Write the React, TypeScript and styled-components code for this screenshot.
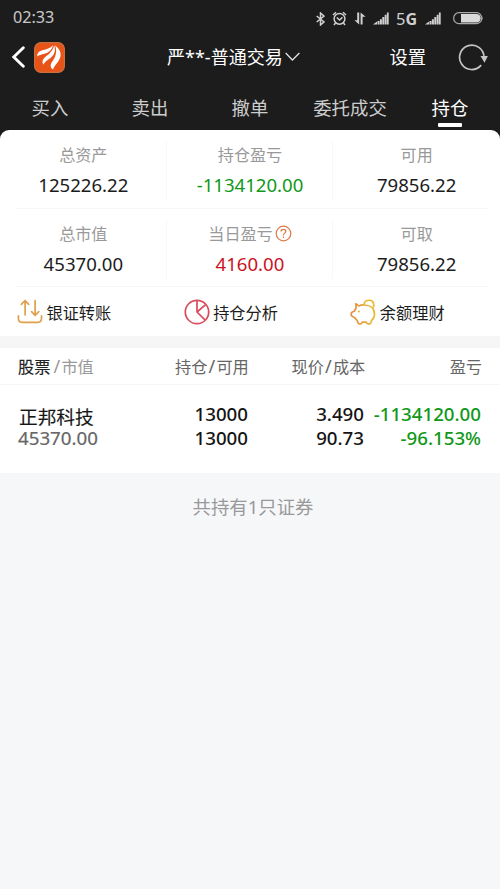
import React from "react";
import styled, { createGlobalStyle } from "styled-components";

const GlobalStyle = createGlobalStyle`
  * { box-sizing: border-box; }
  body {
    margin: 0;
    background: #f6f7f9;
    font-family: "Noto Sans", "Noto Sans CJK SC", sans-serif;
    color: #1c1c1c;
  }
  svg { display: block; flex: none; }
`;

const Screen = styled.div`
  width: 500px;
  height: 889px;
  overflow: hidden;
  background: #f6f7f9;
  white-space: nowrap;
`;

const Header = styled.header`
  height: 130px;
  background: #1c1c1c;
  color: #fff;
`;

const StatusBar = styled.div`
  display: flex;
  align-items: center;
  justify-content: space-between;
  height: 34px;
  padding: 0 16px 0 13px;
`;

const Clock = styled.span`
  font-size: 16.2px;
  line-height: 20px;
  color: #c9c9c9;
`;

const StatusIcons = styled.div`
  display: flex;
  align-items: center;
  padding-top: 3px;
  color: #cfcfcf;
`;

const Network = styled.span`
  display: flex;
  align-items: baseline;
  width: 22px;
  margin: 1px 7px 0 7px;
  font-size: 16.5px;
  line-height: 16px;
  b { font-weight: 700; font-size: 16px; }
`;

const NavBar = styled.div`
  display: grid;
  grid-template-columns: 167px 1fr 200px;
  align-items: center;
  height: 46px;
`;

const NavLeft = styled.div`
  display: flex;
  align-items: center;
  gap: 8px;
  padding-left: 11px;
`;

const AccountTitle = styled.div`
  display: flex;
  align-items: center;
  gap: 2px;
  font-size: 18px;
  line-height: 26px;
`;

const NavRight = styled.div`
  display: flex;
  align-items: center;
  justify-content: flex-end;
  gap: 32px;
  padding-right: 12px;
  font-size: 18.3px;
  line-height: 26px;
`;

const Tabs = styled.nav`
  display: grid;
  grid-template-columns: repeat(5, 1fr);
  height: 50px;
  padding-top: 15px;
`;

const Tab = styled.div<{ $active?: boolean }>`
  display: flex;
  flex-direction: column;
  align-items: center;
  font-size: 18.4px;
  line-height: 26px;
  color: ${(p) => (p.$active ? "#fff" : "#cdcdcd")};
`;

const TabMark = styled.span`
  width: 24px;
  height: 4px;
  margin-top: 2px;
  border-radius: 1px;
  background: #fff;
`;

const CardBackdrop = styled.div`
  background: #1c1c1c;
`;

const Card = styled.section`
  height: 206px;
  background: #fff;
  border-radius: 9px 9px 0 0;
`;

const StatRow = styled.div`
  display: grid;
  grid-template-columns: repeat(3, 1fr);
  height: 78.5px;
  padding-top: 10px;
  background: linear-gradient(#f7f7f7, #f7f7f7) 16px 100% / 472px 1px no-repeat;
`;

const Stat = styled.div`
  display: flex;
  flex-direction: column;
  align-items: center;
  height: 60px;
  padding: 4px 0 0 1px;
  border-right: 1px solid #f8f8f8;
  &:last-child { border-right-color: transparent; }
`;

const StatLabel = styled.div`
  display: flex;
  align-items: center;
  font-size: 16.1px;
  line-height: 22px;
  color: #999;
`;

const StatValue = styled.div<{ $color?: string }>`
  margin-top: 6px;
  font-size: 18.6px;
  line-height: 26px;
  color: ${(p) => p.$color ?? "#1c1c1c"};
`;

const Actions = styled.div`
  display: grid;
  grid-template-columns: repeat(3, 1fr);
  height: 49px;
  padding-left: 17px;
  margin-right: -17px;
`;

const Action = styled.div`
  display: flex;
  align-items: center;
  gap: 3.5px;
  font-size: 16.2px;
`;

const Gap = styled.div`
  height: 12px;
  background: #f6f6f7;
`;

const TableHead = styled.div`
  display: grid;
  grid-template-columns: 157px 116.5px 1fr auto;
  align-items: center;
  height: 37px;
  padding: 2px 18px 0;
  background: #fff;
  border-bottom: 1px solid #f5f5f5;
  font-size: 16.2px;
  color: #666;
`;

const HeadCell = styled.div`
  line-height: 24px;
`;

const HeadMain = styled.span`
  color: #222;
  -webkit-text-stroke: 0.15px #222;
`;

const HeadMuted = styled.span`
  color: #999;
`;

const Slash = styled.span<{ $gap?: number }>`
  margin-left: ${(p) => p.$gap ?? 1}px;
  margin-right: 1.3px;
  font-size: 18px;
  line-height: 20px;
`;

const Holding = styled.div`
  display: grid;
  grid-template-columns: 1fr 116px 117px;
  height: 88px;
  padding: 17px 19px 0 18px;
  background: #fff;
  font-size: 18.7px;
  line-height: 24px;
`;

const HoldingLeft = styled.div`
  display: flex;
  justify-content: space-between;
`;

const Cell = styled.div<{ $color?: string }>`
  font-weight: 500;
  text-align: right;
  color: ${(p) => p.$color ?? "#141414"};
`;

const StockName = styled.div`
  padding: 3px 0 0 1px;
  line-height: 23px;
  color: #161616;
  -webkit-text-stroke: 0.15px #161616;
`;

const StockValue = styled.div`
  line-height: 20px;
  color: #666;
  -webkit-text-stroke: 0.2px #666;
`;

const Summary = styled.div`
  padding: 21px 0 0 6px;
  text-align: center;
  font-size: 18.4px;
  line-height: 26px;
  color: #999;
`;

const Spacer = styled.span<{ $w: number }>`
  width: ${(p) => p.$w}px;
  flex: none;
`;

const Signal = () => (
  <svg width="16" height="13" viewBox="0 0 16 13" fill="currentColor">
    <path d="M0 12.5 4 9.5v3zM4.5 9h2v3.5h-2zM6.9 7.2h2v5.3h-2zM9.3 5h2v7.5h-2zM11.7 2.8h1.9v9.7h-1.9zM13.9 .5h1.8v12h-1.8z" />
  </svg>
);

const Bluetooth = () => (
  <svg width="9" height="14" viewBox="0 0 9 14" fill="none" stroke="currentColor" strokeWidth="1.5">
    <path d="M.7 4 8 9.8 4.5 13V1L8 4.2.7 10" />
  </svg>
);

const Alarm = () => (
  <svg width="15" height="15" viewBox="0 0 15 15" fill="none" stroke="currentColor" strokeWidth="1.5">
    <circle cx="7.5" cy="7.8" r="5.4" />
    <path d="M4.8 6.5 7.5 9l3-2.6M1 4 4 1.2M14 4l-3-2.8M3.5 12 2 14M11.5 12l1.5 2" />
  </svg>
);

const DataArrows = () => (
  <svg width="12" height="13" viewBox="0 0 12 13" fill="currentColor">
    <path d="M3.2.5h2V12.5L.4 8.2H3.2zM6.6 12.5h2V4.8h3L6.6.5z" />
  </svg>
);

const Battery = () => (
  <svg width="31" height="13" viewBox="0 0 31 13">
    <rect x=".7" y=".7" width="28" height="11" rx="5.3" fill="none" stroke="#a9a9a9" strokeWidth="1.2" />
    <path d="M8 2h15.5a4.2 4.2 0 0 1 0 8.4H8z" fill="#d9d9d9" />
    <path d="M29.2 4v4.6q1.5-2.3 0-4.6" fill="#a9a9a9" />
  </svg>
);

const BackArrow = () => (
  <svg width="15" height="22" viewBox="0 0 15 22" fill="none" stroke="#fff" strokeWidth="2.9" strokeLinecap="round">
    <path d="M12.3 1.8 2.8 11l9.5 9.2" />
  </svg>
);

const Logo = () => (
  <svg width="31" height="31" viewBox="0 0 31 31">
    <rect x=".6" y=".6" width="29.8" height="29.8" rx="6.5" fill="#e85318" stroke="#c9713f" strokeWidth="1.2" />
    <g fill="#fff">
      <path d="M3 14.5 C3 11 5 9.1 9 8 C12.5 7.2 16 6.5 19 3.2 C17.8 8 14.8 10.6 10.5 11.8 C7.5 12.6 5 13.2 3 14.5Z" />
      <path d="M9.4 22.7 C7.7 19.8 8.3 17.4 11.5 14.7 C15.5 11.6 19 8.5 20.1 3.2 C22.5 9.8 19.5 14 15 17.1 C12 19.2 10.3 20.7 9.4 22.7Z" />
      <path d="M19.1 27.5 C16 25.5 15.9 22.8 18.5 19.2 C21.4 15.2 23.5 10.3 21.1 3.3 C27.2 8.3 28.3 13.8 24.2 19.5 C21.4 23.3 19.6 25.1 19.1 27.5Z" />
    </g>
  </svg>
);

const ChevronDown = () => (
  <svg width="15" height="10" viewBox="0 0 15 10" fill="none" stroke="#e2e2e2" strokeWidth="1.3">
    <path d="M.7 1 7.4 8 14.4 1" />
  </svg>
);

const Refresh = () => (
  <svg width="30" height="28" viewBox="0 0 30 28">
    <path d="M23.2 22.1A12.2 12.2 0 1 1 26 14.5" fill="none" stroke="#c4c4c4" strokeWidth="1.7" />
    <path d="M22.5 13h7.4l-3.4 6.8z" fill="#c4c4c4" />
  </svg>
);

const Help = () => (
  <svg width="17" height="17" viewBox="0 0 17 17" fill="none" stroke="#dd7a48" strokeWidth="1.2">
    <circle cx="8.5" cy="8.5" r="7.3" />
    <path d="M6 6.5c0-3 4.8-2.9 4.8-.1 0 1.7-2.3 1.8-2.3 3.6v.5M8.5 11.6v1.5" />
  </svg>
);

const Transfer = () => (
  <svg width="26" height="25" viewBox="0 0 26 25" fill="none" stroke="#dfa14c" strokeWidth="1.7" strokeLinecap="round" strokeLinejoin="round">
    <path d="M8.1 16V1.6M4.3 5.4l3.8-3.9 3.6 3.9M18.1 1.6v14.8M14.6 12.7l3.5 3.8 3.7-3.8M1.4 16.8v2.8q0 3.7 3.7 3.7h15.7q3.7 0 3.7-3.7v-2.8" />
  </svg>
);

const Pie = () => (
  <svg width="26" height="26" viewBox="0 0 26 26" fill="none" stroke="#d94c5b" strokeWidth="1.7">
    <circle cx="13" cy="13" r="11.7" />
    <path d="M13 1.3V13l8.2 8.2M13 13l8.6-7.4" />
  </svg>
);

const PiggyBank = () => (
  <svg width="26" height="26" viewBox="0 0 26 26" fill="none" strokeWidth="1.7" strokeLinejoin="round">
    <defs>
      <linearGradient id="pig" x1="0" x2="1">
        <stop offset="0" stopColor="#e58a43" />
        <stop offset="1" stopColor="#e8bb35" />
      </linearGradient>
    </defs>
    <path stroke="url(#pig)" d="M5.8 4.8 8.9 6.9Q11 5.8 14 6c6.5.1 10.5 3.4 10.5 9 0 3-1.2 5.2-3 6.5l-.5 2q-.4 1.4-1.6 1.4h-1.5q-1.1 0-1.5-1.8h-4.1q-.4 1.8-1.5 1.8H9.3q-1.1 0-1.4-1.4l-.7-2-2.4-2.6L2 17.1q-.8-.4-.8-1.9t.8-2l2.5-1.2 1.6-3z" />
    <path stroke="#e8bb35" d="M14 5.7c.6-5.8 9.3-6.1 9.8.2q0 1.5-.8 2.7" />
    <circle cx="8.8" cy="12.6" r="1" fill="#e8a63c" />
  </svg>
);

const GREEN = "#109818";
const RED = "#cb1222";

export default function App() {
  return (
    <Screen>
      <GlobalStyle />
      <Header>
        <StatusBar>
          <Clock>02:33</Clock>
          <StatusIcons>
            <Bluetooth />
            <Spacer $w={7} />
            <Alarm />
            <Spacer $w={7} />
            <DataArrows />
            <Spacer $w={7} />
            <Signal />
            <Network>5<b>G</b></Network>
            <Signal />
            <Spacer $w={12} />
            <Battery />
          </StatusIcons>
        </StatusBar>
        <NavBar>
          <NavLeft>
            <BackArrow />
            <Logo />
          </NavLeft>
          <AccountTitle>
            严**-普通交易
            <ChevronDown />
          </AccountTitle>
          <NavRight>
            设置
            <Refresh />
          </NavRight>
        </NavBar>
        <Tabs>
          <Tab>买入</Tab>
          <Tab>卖出</Tab>
          <Tab>撤单</Tab>
          <Tab>委托成交</Tab>
          <Tab $active>
            持仓
            <TabMark />
          </Tab>
        </Tabs>
      </Header>
      <CardBackdrop>
        <Card>
          <StatRow>
            <Stat>
              <StatLabel>总资产</StatLabel>
              <StatValue>125226.22</StatValue>
            </Stat>
            <Stat>
              <StatLabel>持仓盈亏</StatLabel>
              <StatValue $color={GREEN}>-1134120.00</StatValue>
            </Stat>
            <Stat>
              <StatLabel>可用</StatLabel>
              <StatValue>79856.22</StatValue>
            </Stat>
          </StatRow>
          <StatRow>
            <Stat>
              <StatLabel>总市值</StatLabel>
              <StatValue>45370.00</StatValue>
            </Stat>
            <Stat>
              <StatLabel>
                当日盈亏
                <Spacer $w={2} />
                <Help />
              </StatLabel>
              <StatValue $color={RED}>4160.00</StatValue>
            </Stat>
            <Stat>
              <StatLabel>可取</StatLabel>
              <StatValue>79856.22</StatValue>
            </Stat>
          </StatRow>
          <Actions>
            <Action><Transfer />银证转账</Action>
            <Action><Pie />持仓分析</Action>
            <Action><PiggyBank />余额理财</Action>
          </Actions>
        </Card>
      </CardBackdrop>
      <Gap />
      <TableHead>
        <HeadCell>
          <HeadMain>股票</HeadMain>
          <HeadMuted><Slash $gap={3}>/</Slash>市值</HeadMuted>
        </HeadCell>
        <HeadCell>持仓<Slash>/</Slash>可用</HeadCell>
        <HeadCell>现价<Slash>/</Slash>成本</HeadCell>
        <HeadCell>盈亏</HeadCell>
      </TableHead>
      <Holding>
        <HoldingLeft>
          <div>
            <StockName>正邦科技</StockName>
            <StockValue>45370.00</StockValue>
          </div>
          <Cell>13000<br />13000</Cell>
        </HoldingLeft>
        <Cell>3.490<br />90.73</Cell>
        <Cell $color={GREEN}>-1134120.00<br />-96.153%</Cell>
      </Holding>
      <Summary>共持有1只证券</Summary>
    </Screen>
  );
}
